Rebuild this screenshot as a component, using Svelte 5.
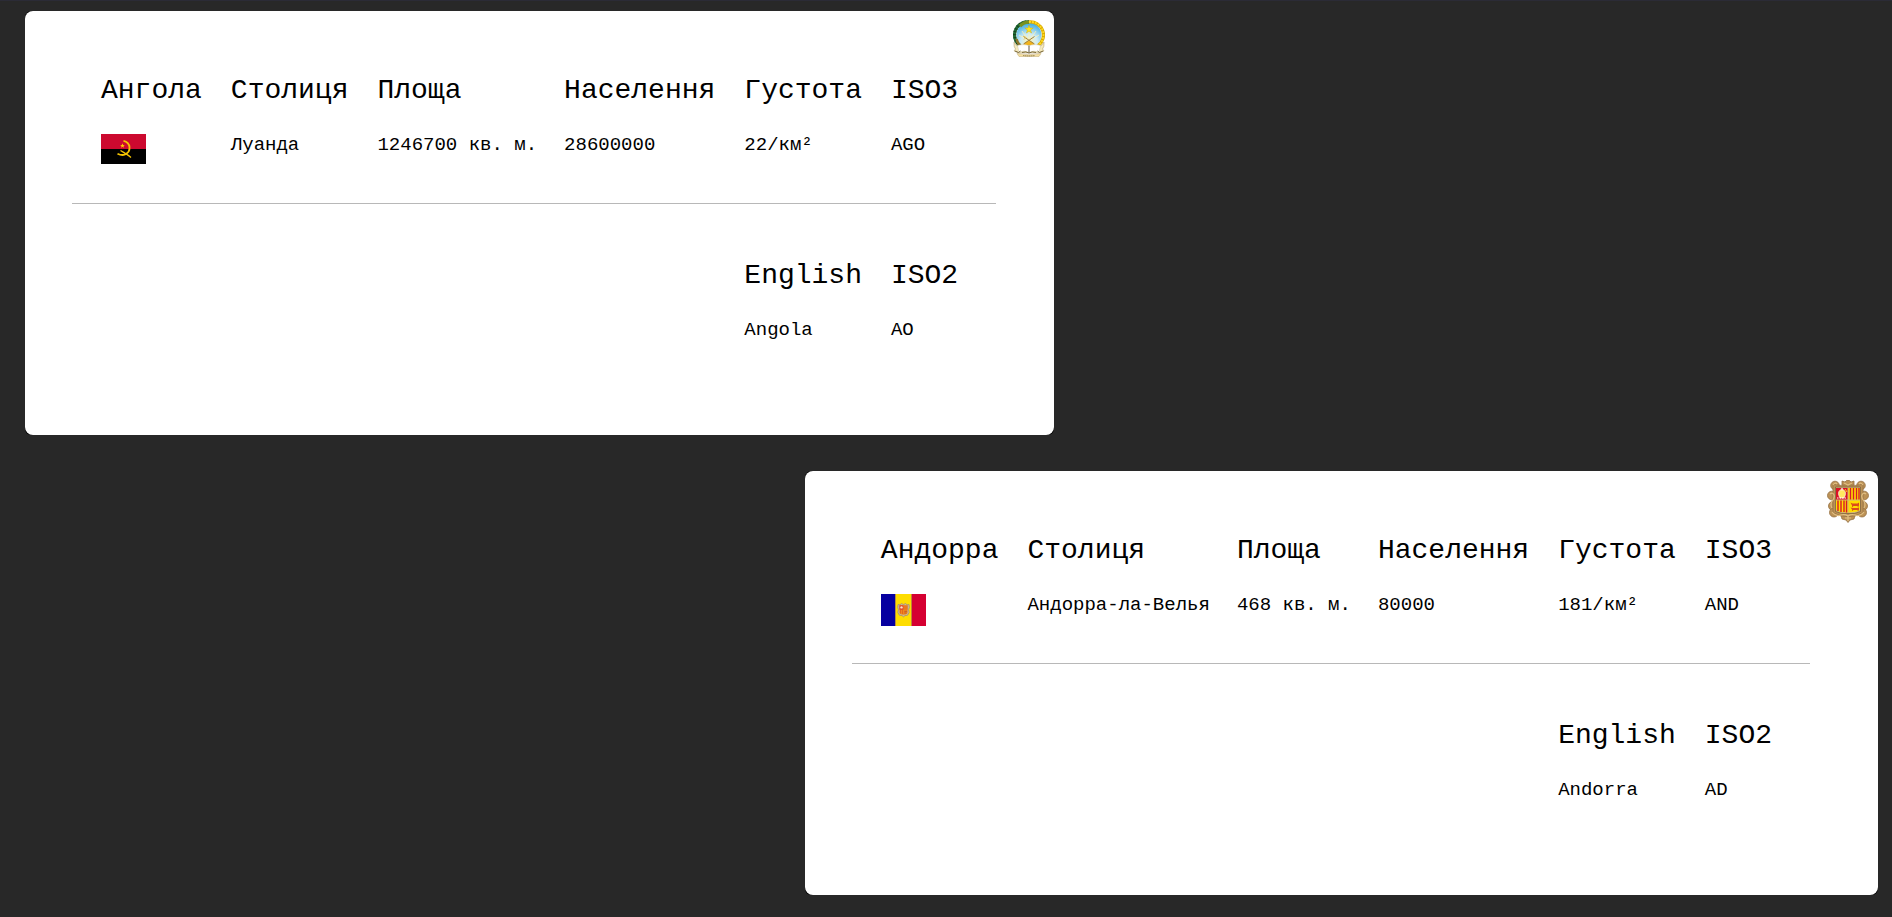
<script>
  const countries = [
    {
      name: 'Ангола', capital: 'Луанда', area: '1246700 кв. м.', population: '28600000',
      density: '22/км²', iso3: 'AGO', english: 'Angola', iso2: 'AO', side: 'left'
    },
    {
      name: 'Андорра', capital: 'Андорра-ла-Велья', area: '468 кв. м.', population: '80000',
      density: '181/км²', iso3: 'AND', english: 'Andorra', iso2: 'AD', side: 'right'
    }
  ];
</script>

{#snippet angolaFlag()}
  <svg class="flag" width="45" height="30" viewBox="0 0 45 30" aria-hidden="true">
    <rect width="45" height="15" fill="#cc092f" />
    <rect y="15" width="45" height="15" fill="#000" />
    <g fill="none" stroke="#f5c400">
      <path d="M22.500 6.800c7.500 1.500 8 11 1.500 13.700-2 .9-5 .4-7.500-.8" stroke-width="1.800" />
      <path d="M19.500 16.500c3 2 7 4 10.500 7" stroke-width="1.300" />
    </g>
    <path d="M21.500 9.200l.6 1.700h1.800l-1.400 1.100.5 1.700-1.500-1-1.500 1 .5-1.700-1.400-1.100h1.800z" fill="#ffcb00" />
  </svg>
{/snippet}

{#snippet andorraFlag()}
  <svg class="flag" width="45" height="32" viewBox="0 0 45 32" aria-hidden="true">
    <rect width="14.500" height="32" fill="#0600a0" />
    <rect x="14.500" width="16" height="32" fill="#fedd00" />
    <rect x="30.500" width="14.500" height="32" fill="#d50032" />
    <path d="M14.500 0v32M30.500 0v32" stroke="#b5862d" stroke-width=".8" />
    <path d="M17 10.500l2 .3 1.500-1.300 2 1 2-1 1.500 1.300 2-.3.4 3-.8 2 .6 3-1.700 2.800-2.500.3-1.500 1.200-1.500-1.200-2.500-.3-1.700-2.800.6-3-.8-2z" fill="#c9b79a" stroke="#a38a70" stroke-width=".7" />
    <path d="M18.500 11.300h8v7.200q0 2-4 2.300-4-.3-4-2.300z" fill="#f08a1c" />
    <path d="M18.500 11.300h4v4.500h-4z" fill="#dd4030" />
    <path d="M24 11.300v4.500M26 11.300v4.500M19.500 16v3.500M21.500 16v4" stroke="#e05a24" stroke-width=".8" />
    <circle cx="20.500" cy="13.400" r="1.200" fill="#fbe6c0" />
    <path d="M23.300 17.300h2.800M23.300 19h2.400" stroke="#c9542c" />
  </svg>
{/snippet}

{#snippet angolaEmblem()}
  <svg class="emblem" width="32" height="37" viewBox="0 0 32 37" aria-hidden="true">
    <defs>
      <radialGradient id="sky" cx=".5" cy=".8" r=".75">
        <stop offset="0" stop-color="#fff6b8" />
        <stop offset=".45" stop-color="#cdebf5" />
        <stop offset="1" stop-color="#45afe3" />
      </radialGradient>
    </defs>
    <circle cx="16" cy="15" r="12.500" fill="url(#sky)" />
    <path d="M16 21L6 15M16 21L9 11M16 21V10M16 21l7-10M16 21l10-6" stroke="#fff3b0" stroke-width=".8" />
    <g fill="none">
      <path d="M16 2A13 13 0 0 0 7 25.500" stroke="#1f6a34" stroke-width="3.200" />
      <path d="M16 2A13 13 0 0 0 7 25.500" stroke="#17401c" stroke-width="3.200" stroke-dasharray="1 2" />
      <path d="M16 2.200A13 13 0 0 0 7 6" stroke="#79911f" stroke-width="3.200" />
      <path d="M3.500 19A13 13 0 0 0 7.500 26" stroke="#8d7429" stroke-width="2.500" />
      <path d="M16 2A13 13 0 0 1 25 25.500" stroke="#d9a900" stroke-width="3.200" />
      <path d="M16 2A13 13 0 0 1 25 25.500" stroke="#ffdc23" stroke-width="1.800" stroke-dasharray="2 1" />
    </g>
    <path d="M16 5l1 3h3.200l-2.600 2 1 3L16 11.200 13.400 13l1-3-2.600-2H15z" fill="#ffe51f" stroke="#cfa700" stroke-width=".4" />
    <path d="M10 25q6-8 12 0z" fill="#f2b41b" />
    <path d="M10.500 16.500l11 7.500M21.500 16.500l-11 7.500" stroke="#9a7f45" />
    <path d="M10 16l3 1.500-2 2" fill="none" stroke="#e3c35b" />
    <path d="M1 22q-.5 5 1.500 7l-1.500 2 5 2h20l5-2-1.500-2q2-2 1.500-7l-3 4-3-1-9 2-9-2-3 1z" fill="#f6eabc" stroke="#a49165" stroke-width=".5" />
    <path d="M4.500 25.500q7-2 11.500.5 4.500-2.500 11.500-.5l-1.500 6.500q-5.500-2-10 .5-4.500-2.500-10-.5z" fill="#fff" stroke="#c2bba2" stroke-width=".4" />
    <path d="M16 25.500v7" stroke="#493f2b" stroke-width=".9" />
    <path d="M2 31l3.500 1.500 2-1.500M30 31l-3.500 1.500-2-1.500M9 32.500q4-1.500 7 .5 3-2 7-.5" fill="none" stroke="#6d5c30" stroke-width=".9" />
    <path d="M4 33.500q12 2.500 24 0l-2 3H6z" fill="#f5dfa0" stroke="#b29858" stroke-width=".4" />
    <path d="M10 35.500q6 .8 12 0" fill="none" stroke="#806d3b" stroke-width=".8" stroke-dasharray="1.500 .5" />
  </svg>
{/snippet}

{#snippet andorraEmblem()}
  <svg class="emblem" width="42" height="43" viewBox="0 0 42 43" aria-hidden="true">
    <g fill="#bc9256" stroke="#967144" stroke-width=".8">
      <circle cx="8" cy="5.500" r="4.300" />
      <circle cx="34" cy="5.500" r="4.300" />
      <circle cx="4.800" cy="15.500" r="4.300" />
      <circle cx="37.200" cy="15.500" r="4.300" />
      <circle cx="6" cy="26" r="4.500" />
      <circle cx="36" cy="26" r="4.500" />
      <circle cx="7" cy="32.500" r="4.500" />
      <circle cx="35" cy="32.500" r="4.500" />
      <path d="M15 1l3 1 1.500-1.500h3L24 2l3-1v4l-4 3h-4l-4-3z" />
      <path d="M14 35h14l-1 4-4 1-2 2.500L19 40l-4-1z" />
      <path d="M6 4.500q7 1.500 15 .5 8 1 15-.5v28q-7 4.500-15 4-8 .5-15-4z" />
    </g>
    <path d="M6 5q2-3 4-1M36 5q-2-3-4-1M3 14q3-2 4 1t-2 6q-2 4 0 7M39 14q-3-2-4 1t2 6q2 4 0 7M5 32q4 5 9 3 4-1 7 1 3-2 7-1 5 2 9-3M17 3l4 2 4-2M18 38h6M21 36v5" fill="none" stroke="#e1bf83" stroke-width="1.200" />
    <path d="M8.500 7v24.500q6 3 12.500 2 6.500 1 12.500-2V7z" fill="#ceb27d" stroke="#765b38" stroke-width=".7" />
    <path d="M9 8h11.500v11.500H9z" fill="#db1025" />
    <path d="M21.500 8H33v11.500H21.500z" fill="#ffdd00" />
    <path d="M9 20.500h11.500V32.500Q9 32 9 29z" fill="#ffdd00" />
    <path d="M21.500 20.500H33V29q0 3-11.500 3.500z" fill="#ffdd00" />
    <path d="M23.500 8v11.500M26.500 8v11.500M29.500 8v11.500M32 8v11.500M11 20.500v10.500M14 20.500v11.500M17 20.500v11.500M19.500 20.500v12" stroke="#d81928" stroke-width="1.400" />
    <path d="M12 16q-2-5 3-7 5 2 3 7l-1 2h-4z" fill="#ffea61" stroke="#fff" stroke-width=".6" />
    <path d="M10 18h9M15 8v3" stroke="#fff" stroke-width="1.200" stroke-dasharray="1.500 1" />
    <path d="M18 9l2 3" stroke="#ffd500" />
    <path d="M23.500 22.500l2 1h5l1.500-1v3l-1 2-.5-1.500h-4l-1.500 1.500v-2zM23.500 27.500l2 .5h5l1.500-.5v2l-1 2-.5-1.500h-4l-1.500 1v-1.500z" fill="#dc4a1c" />
  </svg>
{/snippet}

<main>
  {#each countries as c}
    <article class={c.side}>
      <div class="panel">
        <table>
          <thead>
            <tr>
              <th scope="col">{c.name}</th>
              <th scope="col">Столиця</th>
              <th scope="col">Площа</th>
              <th scope="col">Населення</th>
              <th scope="col">Густота</th>
              <th scope="col">ISO3</th>
            </tr>
          </thead>
          <tbody>
            <tr class="ruled">
              <td>
                {#if c.iso2 === 'AO'}{@render angolaFlag()}{:else}{@render andorraFlag()}{/if}
              </td>
              <td>{c.capital}</td>
              <td>{c.area}</td>
              <td>{c.population}</td>
              <td>{c.density}</td>
              <td>{c.iso3}</td>
            </tr>
            <tr class="second">
              <td colspan="4"></td>
              <th scope="col">English</th>
              <th scope="col">ISO2</th>
            </tr>
            <tr>
              <td colspan="4"></td>
              <td>{c.english}</td>
              <td>{c.iso2}</td>
            </tr>
          </tbody>
        </table>
        {#if c.iso2 === 'AO'}{@render angolaEmblem()}{:else}{@render andorraEmblem()}{/if}
      </div>
    </article>
  {/each}
</main>

<style>
  :global(body) {
    background: #282828;
  }
  main {
    display: flex;
    flex-direction: column;
    gap: 36px;
    box-sizing: border-box;
    min-height: 100vh;
    padding: 10px 14px 22px 25px;
    border-top: 1px solid #2b2b36;
    font-family: 'Liberation Mono', 'Courier New', monospace;
    color: #000;
  }
  article {
    border-radius: 6px;
    background: #000;
  }
  .panel {
    display: flex;
    align-items: flex-start;
    gap: 17px;
    padding: 0 9px 94px 47px;
    border-radius: 8px;
    background: #fff;
  }
  .left {
    align-self: flex-start;
  }
  .right {
    align-self: flex-end;
  }
  table {
    border-spacing: 0;
    text-align: left;
    white-space: nowrap;
  }
  th,
  td {
    padding: 0 29px 0 0;
    vertical-align: top;
  }
  td {
    padding-right: 27px;
    font-size: 19px;
    line-height: 22px;
  }
  th {
    padding-bottom: 27px;
    font-size: 28px;
    font-weight: 400;
    line-height: 32px;
  }
  th:first-child,
  td:first-child {
    padding-left: 29px;
  }
  th:last-child,
  td:last-child {
    padding-right: 38px;
  }
  thead th {
    padding-top: 64px;
  }
  .ruled td {
    height: 32px;
    padding-bottom: 37px;
    border-bottom: 1px solid #b8b8b8;
  }
  .second th {
    padding-top: 56px;
  }
  .flag {
    display: block;
  }
  .emblem {
    flex: none;
    margin-top: 9px;
  }
</style>
